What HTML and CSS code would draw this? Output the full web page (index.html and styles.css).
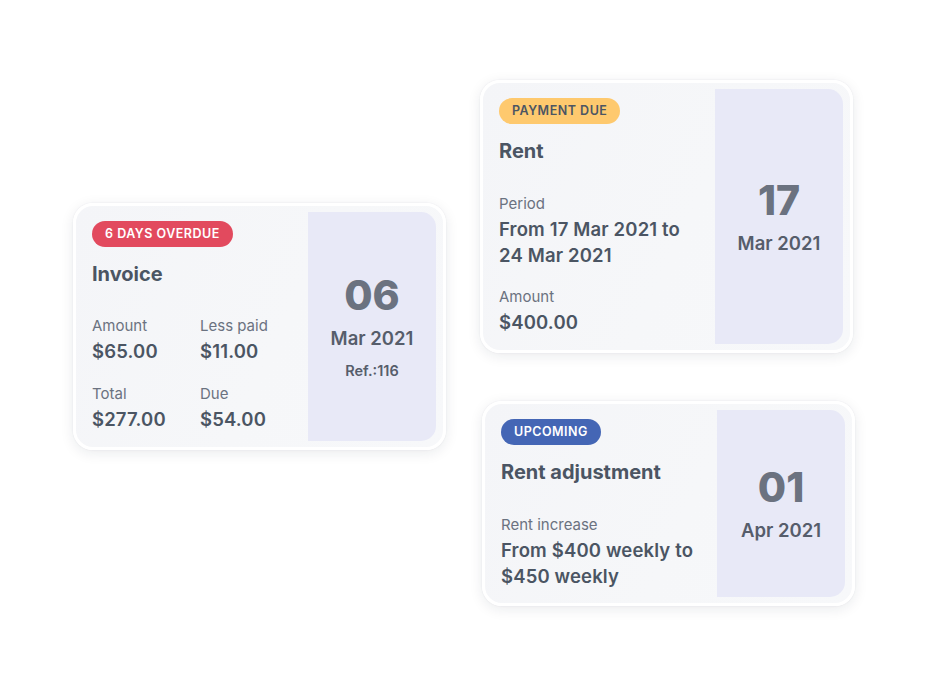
FILE: index.html
```html
<!DOCTYPE html>
<html lang="en">
<head>
    <meta charset="UTF-8">
    <meta name="viewport" content="width=device-width, initial-scale=1.0">
    <title>payments</title>
    <link rel="stylesheet" href="styles.css">
</head>
<body>
    <div class="board">
        <div class="card invoice">
            <div class="card-body">
                <span class="badge overdue">6 DAYS OVERDUE</span>
                <h2 class="title">Invoice</h2>
                <div class="grid">
                    <div class="field">
                        <span class="label">Amount</span>
                        <span class="value">$65.00</span>
                    </div>
                    <div class="field">
                        <span class="label">Less paid</span>
                        <span class="value">$11.00</span>
                    </div>
                    <div class="field">
                        <span class="label">Total</span>
                        <span class="value">$277.00</span>
                    </div>
                    <div class="field">
                        <span class="label">Due</span>
                        <span class="value">$54.00</span>
                    </div>
                </div>
            </div>
            <div class="date">
                <span class="day">06</span>
                <span class="month">Mar 2021</span>
                <span class="ref">Ref.:116</span>
            </div>
        </div>

        <div class="column">
            <div class="card rent">
                <div class="card-body">
                    <span class="badge due">PAYMENT DUE</span>
                    <h2 class="title">Rent</h2>
                    <div class="field first">
                        <span class="label">Period</span>
                        <span class="value">From 17 Mar 2021 to<br>24 Mar 2021</span>
                    </div>
                    <div class="field">
                        <span class="label">Amount</span>
                        <span class="value">$400.00</span>
                    </div>
                </div>
                <div class="date">
                    <span class="day">17</span>
                    <span class="month">Mar 2021</span>
                </div>
            </div>

            <div class="card adjustment">
                <div class="card-body">
                    <span class="badge upcoming">UPCOMING</span>
                    <h2 class="title">Rent adjustment</h2>
                    <div class="field first">
                        <span class="label">Rent increase</span>
                        <span class="value">From $400 weekly to<br>$450 weekly</span>
                    </div>
                </div>
                <div class="date">
                    <span class="day">01</span>
                    <span class="month">Apr 2021</span>
                </div>
            </div>
        </div>
    </div>
</body>
</html>
```

FILE: styles.css
```css
*{
   margin: 0;
   padding: 0;
   box-sizing: border-box;
}

body{
   font-family: Inter, "Noto Sans", sans-serif;
   background-color: white;
   color: #4b5563;
   width: 100%;
   height: 100vh;
}

.board{
   display: flex;
   align-items: flex-start;
   gap: 34px;
   padding: 80px 0 0 73px;
}

.column{
   display: flex;
   flex-direction: column;
   gap: 48px;
}

.card{
   width: 373px;
   display: flex;
   padding: 6px 7px 6px 0;
   border: 3px solid white;
   border-radius: 20px;
   background: linear-gradient(115deg, #f4f5f8 0%, #f6f7f9 55%, #f7f8fa 100%);
   box-shadow: 0 3px 14px rgba(20, 30, 60, 0.09), 0 0 2px rgba(20, 30, 60, 0.08);
}

.invoice{
   margin-top: 123px;
}

.adjustment{
   margin-left: 2px;
}

.card-body{
   flex: 1;
   padding: 9px 0 9px 16px;
   display: flex;
   flex-direction: column;
   align-items: flex-start;
}

.adjustment .card-body{
   padding-bottom: 8px;
}

.badge{
   display: inline-block;
   height: 26px;
   line-height: 26px;
   padding: 0 13px;
   border-radius: 13px;
   font-size: 12.5px;
   font-weight: 600;
   letter-spacing: 0.5px;
}

.overdue{
   background-color: #e24a5e;
   color: white;
}

.due{
   background-color: #fec96e;
   color: #4b5563;
}

.upcoming{
   background-color: #4466b5;
   color: white;
}

.title{
   margin-top: 15px;
   font-size: 20px;
   line-height: 24px;
   font-weight: 700;
   color: #4b5563;
}

.grid{
   display: grid;
   grid-template-columns: 108px 108px;
   row-gap: 20px;
   margin-top: 30px;
}

.field{
   display: flex;
   flex-direction: column;
}

.rent .field + .field{
   margin-top: 19px;
}

.field.first{
   margin-top: 31px;
}

.label{
   font-size: 15px;
   line-height: 20px;
   color: #6b7280;
}

.value{
   margin-top: 2px;
   font-size: 18.5px;
   line-height: 26px;
   font-weight: 600;
   letter-spacing: 0.15px;
   color: #4b5563;
}

.date{
   width: 128px;
   background-color: #e8e9f7;
   border-radius: 0 15px 15px 0;
   display: flex;
   flex-direction: column;
   align-items: center;
   justify-content: center;
}

.day{
   font-size: 41px;
   line-height: 44px;
   font-weight: 800;
   color: #6b7280;
}

.month{
   margin-top: 9px;
   font-size: 18.5px;
   line-height: 24px;
   font-weight: 600;
   color: #565d6b;
}

.ref{
   margin-top: 11px;
   font-size: 14.5px;
   line-height: 20px;
   font-weight: 600;
   color: #565d6b;
}
```
